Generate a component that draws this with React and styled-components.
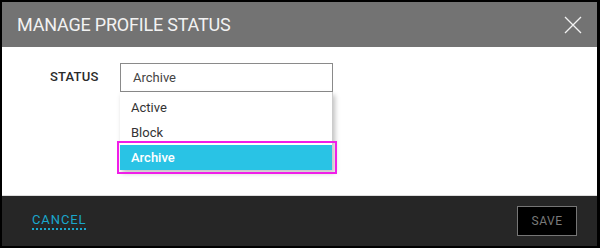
import React from 'react';
import styled, { createGlobalStyle } from 'styled-components';

const GlobalStyle = createGlobalStyle`
  html, body {
    margin: 0;
    padding: 0;
    background: #000;
  }
  body {
    font-family: Roboto, "Liberation Sans", sans-serif;
  }
`;

const Frame = styled.div`
  width: 600px;
  height: 248px;
  box-sizing: border-box;
  padding: 2px 3px 2px 2px;
  background: #000;
`;

const Dialog = styled.div`
  display: flex;
  flex-direction: column;
  height: 100%;
`;

const Header = styled.div`
  height: 45px;
  flex: none;
  background: #737373;
  display: flex;
  align-items: center;
  justify-content: space-between;
  padding: 0 15px 0 15px;
`;

const Title = styled.h1`
  margin: 0;
  font-size: 18px;
  font-weight: 400;
  color: #f2f2f2;
  letter-spacing: -0.2px;
`;

const CloseButton = styled.button`
  border: 0;
  background: none;
  padding: 0;
  width: 18px;
  height: 18px;
  display: flex;
  cursor: pointer;
`;

const Body = styled.div`
  flex: 1;
  background: #fff;
  padding: 16px 0 0 48px;
  border-bottom: 1px solid #ddd;
`;

const Row = styled.div`
  display: flex;
  align-items: center;
`;

const Label = styled.span`
  width: 70px;
  font-size: 13px;
  font-weight: 500;
  color: #2a2a2a;
  letter-spacing: 0.2px;
  padding-bottom: 2px;
`;

const SelectWrap = styled.div`
  position: relative;
  width: 213px;
`;

const SelectBox = styled.div`
  height: 29px;
  box-sizing: border-box;
  border: 1px solid #8a8a8a;
  padding: 0 12px;
  display: flex;
  align-items: center;
  font-size: 13px;
  color: #444;
`;

const Menu = styled.ul`
  position: absolute;
  top: 29px;
  left: 0;
  width: 213px;
  box-sizing: border-box;
  margin: 0;
  padding: 3px 0 0;
  list-style: none;
  background: #fff;
  border-right: 1px solid #ccc;
  box-shadow: 2px 3px 5px rgba(0, 0, 0, 0.25);
`;

const Option = styled.li`
  height: 25px;
  display: flex;
  align-items: center;
  padding-left: 11px;
  font-size: 13px;
  color: ${p => (p.$selected ? '#fff' : '#333')};
  font-weight: ${p => (p.$selected ? 500 : 400)};
  background: ${p => (p.$selected ? '#29c3e5' : 'transparent')};
  position: relative;
  &::after {
    content: '';
    display: ${p => (p.$selected ? 'block' : 'none')};
    position: absolute;
    left: -3px;
    right: -5px;
    top: -4px;
    bottom: -4px;
    border: 2px solid #f01ee8;
  }
`;

const Footer = styled.div`
  height: 50px;
  flex: none;
  background: #262626;
  display: flex;
  align-items: center;
  justify-content: space-between;
  padding: 0 20px 0 30px;
`;

const CancelLink = styled.a`
  font-size: 13px;
  color: #1aa6cc;
  letter-spacing: 0.9px;
  text-decoration: none;
  border-bottom: 2px dotted #1aa6cc;
  padding-bottom: 1px;
  cursor: pointer;
`;

const SaveButton = styled.button`
  width: 60px;
  height: 30px;
  background: #000;
  border: 1px solid #767676;
  color: #7a7a7a;
  font-family: inherit;
  font-size: 12px;
  letter-spacing: 0.5px;
`;

const options = ['Active', 'Block', 'Archive'];

export default function App() {
  const value = 'Archive';
  return (
    <>
      <GlobalStyle />
      <Frame>
        <Dialog>
          <Header>
            <Title>MANAGE PROFILE STATUS</Title>
            <CloseButton aria-label="close">
              <svg width="18" height="18" viewBox="0 0 18 18">
                <path d="M1 1L17 17M17 1L1 17" stroke="#f2f2f2" strokeWidth="1.3" />
              </svg>
            </CloseButton>
          </Header>
          <Body>
            <Row>
              <Label>STATUS</Label>
              <SelectWrap>
                <SelectBox>{value}</SelectBox>
                <Menu>
                  {options.map(o => (
                    <Option key={o} $selected={o === value}>{o}</Option>
                  ))}
                </Menu>
              </SelectWrap>
            </Row>
          </Body>
          <Footer>
            <CancelLink>CANCEL</CancelLink>
            <SaveButton>SAVE</SaveButton>
          </Footer>
        </Dialog>
      </Frame>
    </>
  );
}
